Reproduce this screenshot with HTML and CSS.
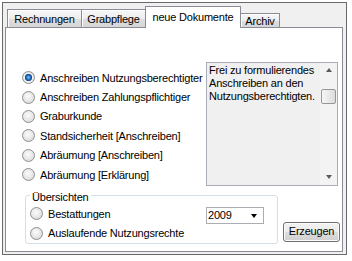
FILE: index.html
```html
<!DOCTYPE html>
<html lang="de">
<head>
    <meta charset="UTF-8">
    <meta name="viewport" content="width=device-width, initial-scale=1.0">
    <title>neue Dokumente</title>
    <link rel="stylesheet" href="styles.css">
</head>
<body>
    <div class="window">
        <div class="frame">
            <div class="tabs">
                <div class="tab tab-rechnungen">Rechnungen</div>
                <div class="tab tab-grabpflege">Grabpflege</div>
                <div class="tab tab-active">neue Dokumente</div>
                <div class="tab tab-archiv">Archiv</div>
            </div>

            <div class="page">
                <div class="top">
                    <div class="choices">
                        <label class="option"><span class="radio checked"></span>Anschreiben Nutzungsberechtigter</label>
                        <label class="option"><span class="radio"></span>Anschreiben Zahlungspflichtiger</label>
                        <label class="option"><span class="radio"></span>Graburkunde</label>
                        <label class="option"><span class="radio"></span>Standsicherheit [Anschreiben]</label>
                        <label class="option"><span class="radio"></span>Abräumung [Anschreiben]</label>
                        <label class="option"><span class="radio"></span>Abräumung [Erklärung]</label>
                    </div>

                    <div class="memo">
                        <div class="memo-text">Frei zu formulierendes Anschreiben an den Nutzungsberechtigten.</div>
                        <div class="scrollbar">
                            <div class="arrow arrow-up"><span></span></div>
                            <div class="track"><div class="thumb"></div></div>
                            <div class="arrow arrow-down"><span></span></div>
                        </div>
                    </div>
                </div>

                <div class="bottom">
                    <div class="group">
                        <div class="group-title">Übersichten</div>
                        <div class="group-body">
                            <div class="group-options">
                                <label class="option"><span class="radio"></span>Bestattungen</label>
                                <label class="option"><span class="radio"></span>Auslaufende Nutzungsrechte</label>
                            </div>
                            <div class="combo">
                                <span>2009</span>
                                <span class="combo-arrow"></span>
                            </div>
                        </div>
                    </div>
                    <button class="btn">Erzeugen</button>
                </div>
            </div>
        </div>
    </div>
</body>
</html>
```

FILE: styles.css
```css
body {
    margin: 0;
    font-family: 'Liberation Sans', Arial, sans-serif;
    font-size: 11px;
    letter-spacing: -0.2px;
    color: #000;
    background-color: #fff;
}

.window {
    width: 352px;
    height: 261px;
    box-sizing: border-box;
    padding: 2px 5px 6px 2px;
    background-color: #fff;
}

.frame {
    height: 100%;
    box-sizing: border-box;
    border: 1px solid #696969;
    background-color: #f0f0f0;
}

/* tab strip */
.tabs {
    display: flex;
    align-items: flex-end;
    height: 22px;
    margin: 3px 0 -1px 4px;
    position: relative;
    z-index: 1;
}

.tab {
    box-sizing: border-box;
    height: 19px;
    padding-top: 3px;
    line-height: 13px;
    text-align: center;
    white-space: nowrap;
    border: 1px solid #898c95;
    background: linear-gradient(#f7f7f7, #ededed 50%, #dedede 51%, #d6d6d6);
    box-shadow: inset 1px 1px 0 #fff;
}

.tab + .tab {
    margin-left: -1px;
}

.tab-rechnungen { width: 75px; }
.tab-grabpflege { width: 65px; }

.tab-active {
    width: 96px;
    height: 22px;
    padding-top: 4px;
    border-bottom: none;
    background: #fff;
    box-shadow: none;
}

.tab-archiv {
    width: 40px;
    height: 15px;
    padding-top: 1px;
}

/* tab page */
.page {
    height: 225px;
    box-sizing: border-box;
    margin: 0 3px 0 2px;
    border: 1px solid #898c95;
    background-color: #fff;
}

.top {
    display: flex;
    padding-left: 16px;
}

.choices {
    width: 184px;
    margin-top: 40px;
}

.option {
    display: flex;
    align-items: center;
    height: 19.4px;
    white-space: nowrap;
}

.radio {
    width: 13px;
    height: 13px;
    box-sizing: border-box;
    flex-shrink: 0;
    margin-right: 5px;
    border: 1px solid #8e8f8f;
    border-radius: 50%;
    background: radial-gradient(circle at 45% 40%, #fbfbfb 0, #e6e6e6 55%, #cfcfcf 100%);
}

.radio.checked {
    background: radial-gradient(circle at 50% 50%, #86d3fb 0, #2c86d8 1.5px, #18488e 3.4px, #f3f3f3 3.9px, #e2e2e2 5.5px);
}

/* read-only text box */
.memo {
    display: flex;
    width: 132px;
    height: 124px;
    box-sizing: border-box;
    margin-top: 34px;
    border: 1px solid #a9adb5;
    background-color: #f0f0f0;
}

.memo-text {
    flex: 1;
    padding: 1px 2px;
    line-height: 13px;
}

.scrollbar {
    display: flex;
    flex-direction: column;
    width: 17px;
    background-color: #f3f3f3;
}

.arrow {
    height: 17px;
    display: flex;
    justify-content: center;
}

.arrow span {
    width: 0;
    height: 0;
    border-left: 3.5px solid transparent;
    border-right: 3.5px solid transparent;
}

.arrow-up span {
    margin-top: 5px;
    border-bottom: 4px solid #5a5a5a;
}

.arrow-down span {
    margin-top: 7px;
    border-top: 4px solid #5a5a5a;
}

.track {
    flex: 1;
}

.thumb {
    width: 15px;
    height: 15px;
    box-sizing: border-box;
    margin: 9px 0 0 1px;
    border: 1px solid #979797;
    border-radius: 2px;
    background: linear-gradient(to right, #f6f6f6, #e9e9e9 50%, #dcdcdc);
}

/* group box and button */
.bottom {
    display: flex;
    align-items: flex-start;
    margin-top: 9px;
    padding-left: 19px;
}

.group {
    display: flex;
    flex-direction: column;
    width: 253px;
    box-sizing: border-box;
    border: 1px solid #d5dfe5;
    border-radius: 3px;
}

.group-title {
    align-self: flex-start;
    margin: -5px 0 0 4px;
    padding: 0 2px;
    line-height: 13px;
    background-color: #fff;
}

.group-body {
    display: flex;
    align-items: flex-start;
}

.group-options {
    width: 176px;
    padding-left: 4px;
}

.combo {
    display: flex;
    align-items: center;
    width: 58px;
    height: 17px;
    box-sizing: border-box;
    margin-top: 3px;
    padding-left: 1px;
    border: 1px solid #abadb3;
    line-height: 15px;
    background-color: #fff;
}

.combo-arrow {
    width: 0;
    height: 0;
    margin: 1px 6px 0 auto;
    border-left: 3.5px solid transparent;
    border-right: 3.5px solid transparent;
    border-top: 4px solid #000;
}

.btn {
    width: 57px;
    height: 20px;
    box-sizing: border-box;
    margin: 27px 0 0 5px;
    padding: 0 0 1px;
    font: inherit;
    letter-spacing: inherit;
    line-height: 17px;
    color: #000;
    border: 1px solid #707070;
    border-radius: 3px;
    background: linear-gradient(#f2f2f2, #ebebeb 50%, #dddddd 51%, #cfcfcf);
    box-shadow: inset 0 0 0 1px #fcfcfc;
}
```
